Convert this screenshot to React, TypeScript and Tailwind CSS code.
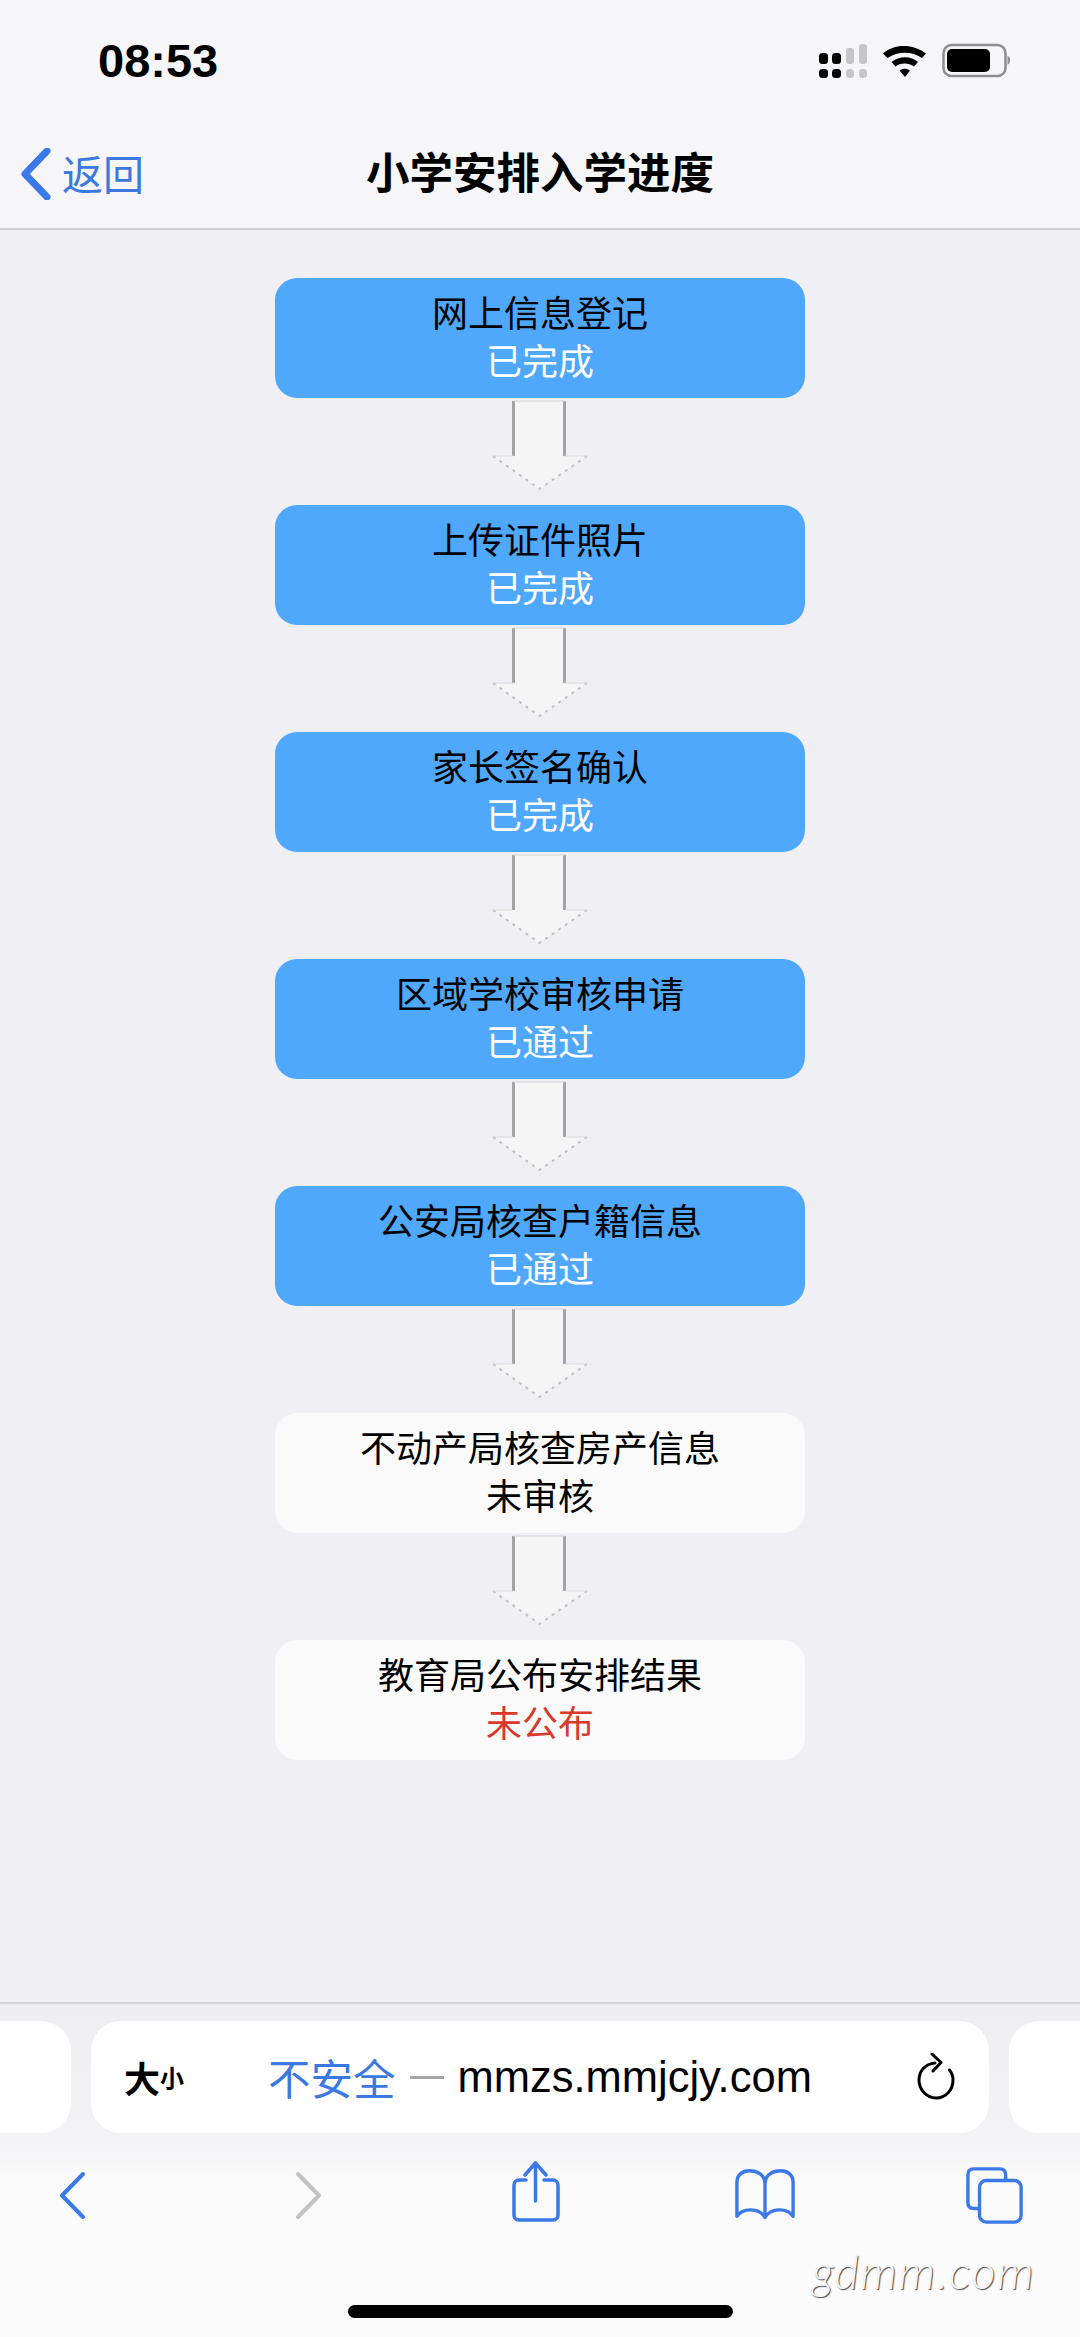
const cjk = "font-['Noto_Sans_CJK_SC','Liberation_Sans',sans-serif]";

type Step = { title: string; status: string; done: boolean; red?: boolean };

const steps: Step[] = [
  { title: "网上信息登记", status: "已完成", done: true },
  { title: "上传证件照片", status: "已完成", done: true },
  { title: "家长签名确认", status: "已完成", done: true },
  { title: "区域学校审核申请", status: "已通过", done: true },
  { title: "公安局核查户籍信息", status: "已通过", done: true },
  { title: "不动产局核查房产信息", status: "未审核", done: false },
  { title: "教育局公布安排结果", status: "未公布", done: false, red: true },
];

function StatusIcons() {
  return (
    <svg width="200" height="36" viewBox="0 0 200 36" className="mt-[43px] mr-[65px]">
      <g fill="#000">
        <rect x="4" y="10" width="9" height="11" rx="3.5" />
        <rect x="17" y="10" width="9" height="11" rx="3.5" />
        <rect x="4" y="26" width="9" height="9" rx="3.5" />
        <rect x="17" y="26" width="9" height="9" rx="3.5" />
      </g>
      <g fill="#c6c6c8">
        <rect x="31" y="5" width="8" height="16" rx="3" />
        <rect x="44" y="1" width="8" height="20" rx="3" />
        <rect x="31" y="26" width="8" height="9" rx="3.5" />
        <rect x="44" y="26" width="8" height="9" rx="3.5" />
      </g>
      <path d="M68 10.500C79 .5 98 .5 111 10.500L107 15C97 8 83 8 72.500 15Z" fill="#000" />
      <path d="M76.500 19C84 12.500 96 12.500 103 19L99 23.500C94 19.500 85 19.500 80.500 23.500Z" fill="#000" />
      <path d="M84.500 27.500C87.500 25 92 25 95 27.500L90 34Z" fill="#000" />
      <rect x="128.500" y="2" width="62" height="31" rx="8" fill="none" stroke="#8e8e90" strokeWidth="2.500" />
      <rect x="132" y="6" width="43" height="23" rx="5" fill="#000" />
      <path d="M192.500 13C196 14 196 20 192.500 22Z" fill="#8e8e90" />
    </svg>
  );
}

function Arrow() {
  return (
    <svg width="96" height="90" viewBox="0 0 96 90" className="mt-[2px] mb-[15px]">
      <path d="M22 1H72V56H95L47.500 89L1 56H22Z" fill="#f5f5f6" />
      <path d="M21.500 1V56" stroke="#a3a3a5" strokeWidth="3" fill="none" />
      <path d="M72.500 1V56" stroke="#a3a3a5" strokeWidth="3" fill="none" />
      <path d="M21 1H73" stroke="#d6d6d8" strokeWidth="1" fill="none" />
      <path d="M1 56L47.500 89L95 56" stroke="#c0c0c2" strokeWidth="2" strokeDasharray="3 5" fill="none" />
      <path d="M1 56H21M73 56H95" stroke="#dcdcde" strokeWidth="1" fill="none" />
    </svg>
  );
}

function StepCard({ step }: { step: Step }) {
  return (
    <div
      className={`flex h-[120px] w-[530px] flex-col items-center rounded-[22px] pt-[9px] text-[36px] leading-[48px] text-black ${
        step.done ? "bg-[#4fa8fb]" : "bg-[#fafafa]"
      }`}
    >
      <div>{step.title}</div>
      <div className={step.done ? "text-white" : step.red ? "text-[#d9382c]" : "text-black"}>{step.status}</div>
    </div>
  );
}

function ReloadIcon() {
  return (
    <svg width="40" height="48" viewBox="0 0 40 48" fill="none" stroke="#000" strokeWidth="3" strokeLinecap="round" strokeLinejoin="round">
      <path d="M19 10C9 11 3 18 3 27C3 37 11 45 20 45C30 45 37 37 37 27C37 23 36 20 33.500 17" />
      <path d="M16 1L25 9.500L17 18" />
    </svg>
  );
}

export default function App() {
  return (
    <div className={`flex h-[2337px] w-[1080px] flex-col overflow-hidden bg-[#efeff4] ${cjk}`}>
      {/* top bars */}
      <header className="h-[230px] shrink-0 border-b-[2px] border-[#cfcfd3] bg-[#f6f6f8]">
        <div className="flex h-[113px] items-start justify-between">
          <div className="ml-[98px] mt-[34px] font-['Liberation_Sans',sans-serif] text-[47px] font-bold leading-[54px] text-black">
            08:53
          </div>
          <StatusIcons />
        </div>
        <div className="relative flex h-[90px] items-center justify-center pb-[8px]">
          <div className="absolute left-[20px] top-[35px] flex items-start">
            <svg width="32" height="52" viewBox="0 0 32 52" fill="none" stroke="#3b78e8" strokeWidth="7" strokeLinecap="round" strokeLinejoin="round">
              <path d="M27 3L5 26L27 49" />
            </svg>
            <span className="ml-[10px] text-[41px] leading-[48px] text-[#3b78e0]">返回</span>
          </div>
          <div className="mt-[34px] text-[43.500px] font-bold leading-[52px] text-black">小学安排入学进度</div>
        </div>
      </header>

      {/* progress steps */}
      <main className="flex flex-1 flex-col items-center pt-[48px]">
        {steps.map((step, i) => (
          <div key={step.title} className="flex flex-col items-center">
            <StepCard step={step} />
            {i < steps.length - 1 && <Arrow />}
          </div>
        ))}
      </main>

      {/* safari toolbar */}
      <footer className="relative h-[335px] shrink-0 border-t-[2px] border-[#d2d2d6] bg-gradient-to-b from-[#eeeef0] via-[#f3f3f5] via-[40%] to-[#fbfbfc] to-[55%]">
        <div className="mt-[17px] flex gap-[20px]">
          <div className="h-[112px] w-[71px] rounded-r-[30px] bg-white" />
          <div className="flex h-[112px] w-[899px] items-center rounded-[30px] bg-white">
            <span className="ml-[33px] text-[36px] font-bold leading-[48px] text-black">大</span>
            <span className="text-[24px] font-bold leading-[48px] text-black">小</span>
            <span className="ml-[84px] text-[42.500px] leading-[50px] text-[#3b78e0]">不安全</span>
            <span className="ml-[15px] h-[3px] w-[34px] bg-[#a5a5a7]" />
            <span className="ml-[13px] font-['Liberation_Sans',sans-serif] text-[43.500px] leading-[50px] text-black">
              mmzs.mmjcjy.com
            </span>
            <span className="ml-[104px] flex">
              <ReloadIcon />
            </span>
          </div>
          <div className="h-[112px] w-[71px] rounded-l-[30px] bg-white" />
        </div>

        <div className="flex items-start">
          <svg width="29" height="49" viewBox="0 0 29 49" fill="none" stroke="#3b78e8" strokeWidth="4" strokeLinecap="round" strokeLinejoin="round" className="ml-[58px] mt-[38px]">
            <path d="M25 3L4 24.500L25 46" />
          </svg>
          <svg width="29" height="49" viewBox="0 0 29 49" fill="none" stroke="#c2c2c4" strokeWidth="4" strokeLinecap="round" strokeLinejoin="round" className="ml-[207px] mt-[38px]">
            <path d="M4 3L25 24.500L4 46" />
          </svg>
          <svg width="50" height="62" viewBox="0 0 50 62" fill="none" stroke="#3b78e8" strokeWidth="3.500" strokeLinecap="round" strokeLinejoin="round" className="ml-[188px] mt-[28px]">
            <path d="M15 19H8C5 19 3 21 3 24V54C3 57 5 59 8 59H42C45 59 47 57 47 54V24C47 21 45 19 42 19H33" />
            <path d="M24.500 2V40" />
            <path d="M14 14L24.500 2L35 14" />
          </svg>
          <svg width="62" height="52" viewBox="0 0 64 52" fill="none" stroke="#3b78e8" strokeWidth="3.500" strokeLinecap="round" strokeLinejoin="round" className="ml-[173px] mt-[35px]">
            <path d="M32 14C31 6 24 2 16 2C9 2 3 6 3 14V49C9 40 26 40 32 50C38 40 55 40 61 49V14C61 6 55 2 48 2C40 2 33 6 32 14Z" />
            <path d="M32 14V50" />
          </svg>
          <svg width="60" height="60" viewBox="0 0 62 60" fill="none" stroke="#3b78e8" strokeWidth="3.500" strokeLinecap="round" strokeLinejoin="round" className="ml-[169px] mt-[32px]">
            <path d="M15 44H9C5 44 3 42 3 38V9C3 5 5 3 9 3H36C40 3 42 5 42 9V15" />
            <rect x="15" y="15" width="43" height="43" rx="7" />
          </svg>
        </div>

        <div className="absolute left-[812px] top-[241px] font-['Lato',sans-serif] text-[47px] font-light italic leading-[52px] tracking-[1.500px] text-[#f6f6f6] [text-shadow:1px_1px_1px_#444]">
          gdmm.com
        </div>
        <div className="absolute left-[348px] top-[301px] h-[13px] w-[385px] rounded-full bg-black" />
      </footer>
    </div>
  );
}
